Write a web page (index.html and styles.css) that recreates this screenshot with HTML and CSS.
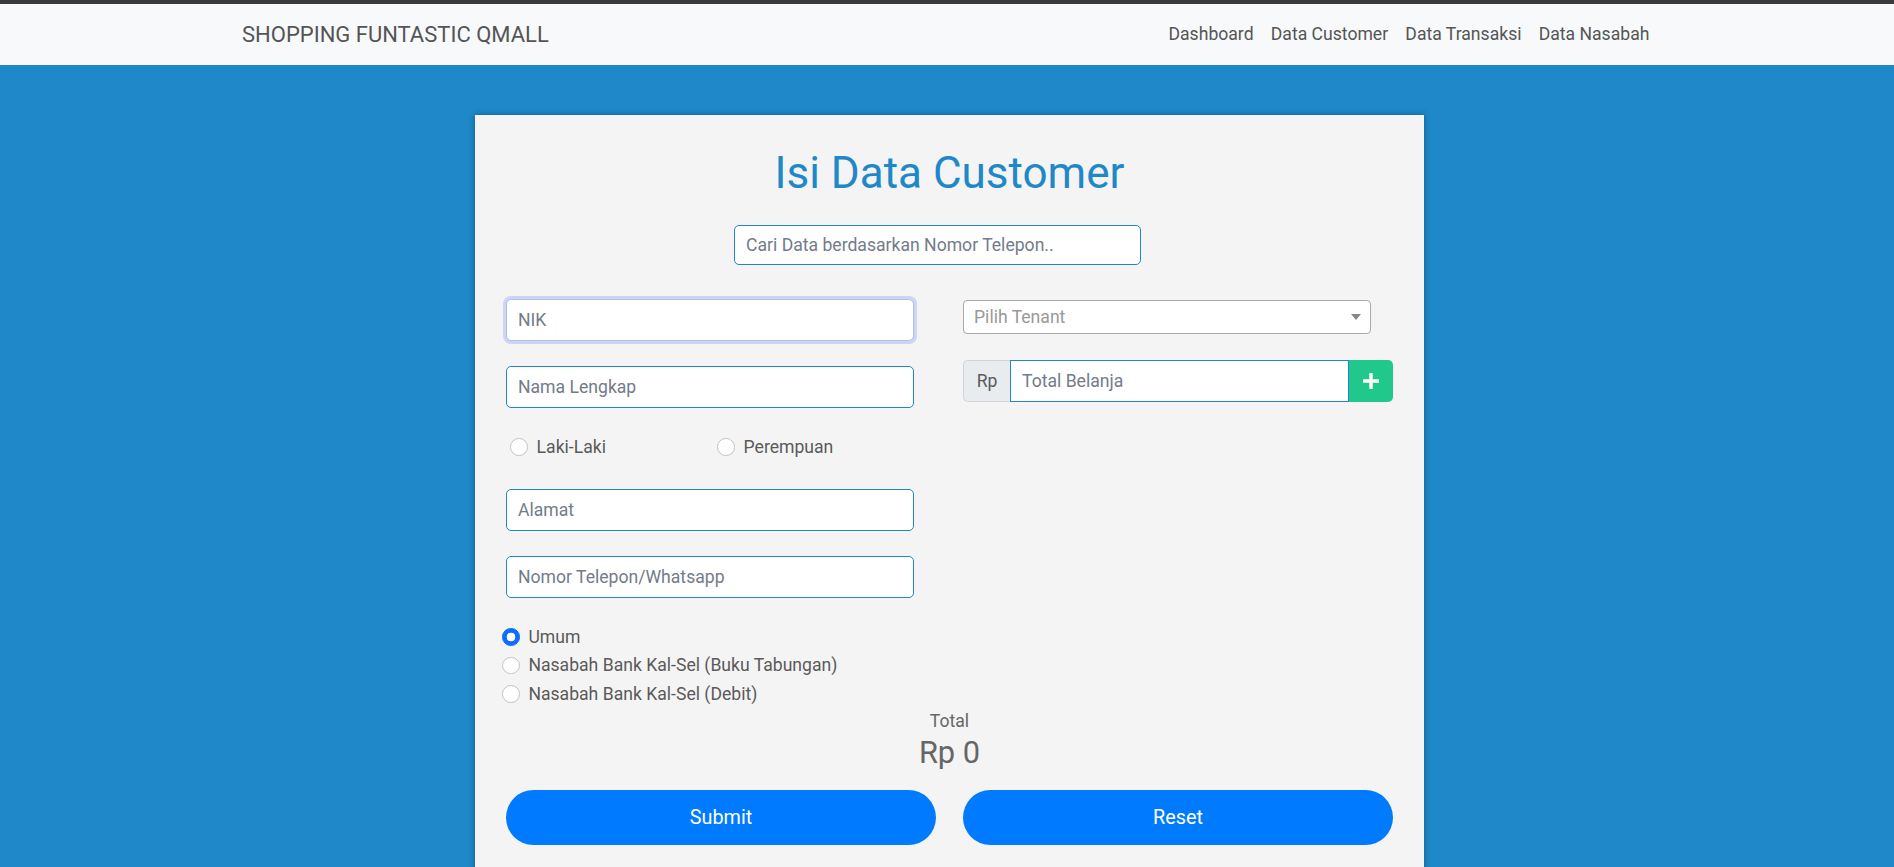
FILE: index.html
```html
<!DOCTYPE html>
<html lang="id">
<head>
<meta charset="utf-8">
<title>Isi Data Customer</title>
<link rel="stylesheet" href="styles.css">
</head>
<body>
<nav class="navbar">
  <div class="nav-container">
    <a class="brand" href="#">SHOPPING FUNTASTIC QMALL</a>
    <ul class="nav-links">
      <li><a href="#">Dashboard</a></li>
      <li><a href="#">Data Customer</a></li>
      <li><a href="#">Data Transaksi</a></li>
      <li><a href="#">Data Nasabah</a></li>
    </ul>
  </div>
</nav>

<main class="main">
  <section class="card">
    <h1 class="title">Isi Data Customer</h1>
    <input class="search" type="text" placeholder="Cari Data berdasarkan Nomor Telepon..">

    <div class="row">
      <div class="col">
        <input class="field field-focus" type="text" placeholder="NIK">
        <input class="field" type="text" placeholder="Nama Lengkap">
        <div class="gender">
          <label class="check first"><input class="radio" type="radio" name="jk"><span>Laki-Laki</span></label>
          <label class="check"><input class="radio" type="radio" name="jk"><span>Perempuan</span></label>
        </div>
        <input class="field" type="text" placeholder="Alamat">
        <input class="field last" type="text" placeholder="Nomor Telepon/Whatsapp">
      </div>
      <div class="col">
        <div class="select">
          <span class="select-text">Pilih Tenant</span>
          <span class="select-arrow"></span>
        </div>
        <div class="input-group">
          <span class="addon">Rp</span>
          <input class="group-input" type="text" placeholder="Total Belanja">
          <button class="add-btn" type="button" aria-label="Tambah">
            <svg width="16" height="16" viewBox="0 0 16 16"><path d="M8 0v16M0 8h16" stroke="#fff" stroke-width="3.4" fill="none"/></svg>
          </button>
        </div>
      </div>
    </div>

    <div class="member">
      <label class="check-line"><input class="radio" type="radio" name="tipe" checked><span>Umum</span></label>
      <label class="check-line"><input class="radio" type="radio" name="tipe"><span>Nasabah Bank Kal-Sel (Buku Tabungan)</span></label>
      <label class="check-line"><input class="radio" type="radio" name="tipe"><span>Nasabah Bank Kal-Sel (Debit)</span></label>
    </div>

    <div class="total">
      <p class="total-label">Total</p>
      <h3 class="total-value">Rp 0</h3>
    </div>

    <div class="actions">
      <button class="btn" type="button">Submit</button>
      <button class="btn" type="button">Reset</button>
    </div>
  </section>
</main>
</body>
</html>
```

FILE: styles.css
```css
* {
  box-sizing: border-box;
}

html, body {
  margin: 0;
  padding: 0;
}

body {
  font-family: Roboto, "Liberation Sans", sans-serif;
  font-size: 17.6px;
  line-height: 1.5;
  color: #5a5a5a;
  background: #1e88c8;
  min-height: 867px;
  overflow: hidden;
}

/* Navbar */
.navbar {
  border-top: 4px solid #3b3b3b;
  background: #f8f9fb;
  height: 65px;
}

.nav-container {
  width: 1426px;
  margin: 0 auto;
  height: 61px;
  display: flex;
  align-items: center;
  justify-content: space-between;
}

.brand {
  padding-left: 8px;
  font-size: 22px;
  line-height: 33px;
  color: #555;
  text-decoration: none;
}

.nav-links {
  display: flex;
  list-style: none;
  margin: 0 2px 0 0;
  padding: 0;
}

.nav-links a {
  display: block;
  padding: 0 8.6px;
  font-size: 17.6px;
  line-height: 26.4px;
  color: #555;
  text-decoration: none;
}

/* Main */
.main {
  padding: 50px 0 0 5px;
}

.card {
  width: 949px;
  margin: 0 auto;
  background: #f4f4f4;
  box-shadow: 0 0 6px rgba(0, 0, 0, 0.35);
  padding: 32px 31px 40px;
}

.title {
  margin: 0 0 25px;
  text-align: center;
  font-size: 44px;
  line-height: 52.8px;
  font-weight: 400;
  color: #1e88c8;
}

.search {
  display: block;
  width: 407px;
  height: 40px;
  margin-left: 228px;
  border: 1px solid #1e88c8;
  border-radius: 5px;
  padding: 0 11px;
  font-family: inherit;
  font-size: 17.6px;
  color: #495057;
  background: #fff;
}

input::placeholder {
  color: #737b8a;
  opacity: 1;
}

/* Form row */
.row {
  display: grid;
  grid-template-columns: 1fr 1fr;
  column-gap: 27px;
  margin-top: 34px;
}

.col {
  display: flex;
  flex-direction: column;
  align-items: flex-start;
}

.field {
  display: block;
  width: 408px;
  height: 42px;
  border: 1px solid #1e88c8;
  border-radius: 5px;
  padding: 0 11px;
  margin-bottom: 25px;
  font-family: inherit;
  font-size: 17.6px;
  color: #495057;
  background: #fff;
}

.field.last {
  margin-bottom: 0;
}

.field-focus {
  border-color: #aebcf0;
  box-shadow: 0 0 0 3px rgba(160, 176, 235, 0.45);
}

.gender {
  display: flex;
  align-items: center;
  height: 24px;
  margin: 2px 0 30px;
}

.check {
  display: flex;
  align-items: center;
  gap: 9px;
  color: #5a5a5a;
}

.check.first {
  width: 211px;
  padding-left: 4px;
}

.radio {
  appearance: none;
  -webkit-appearance: none;
  flex: none;
  width: 17.6px;
  height: 17.6px;
  margin: 0;
  border: 1px solid #c4c4c4;
  border-radius: 50%;
  background: #fff;
}

.radio:checked {
  border-color: #0d6efd;
  background: #0d6efd radial-gradient(circle, #fff 0 4.2px, transparent 4.6px);
}

/* Right column */
.select {
  width: 408px;
  height: 34px;
  border: 1px solid #aaa;
  border-radius: 4px;
  background: #fff;
  display: flex;
  align-items: center;
  justify-content: space-between;
  padding: 0 9px 0 10px;
  margin: 1px 0 26px;
}

.select-text {
  color: #999;
  font-size: 17.6px;
}

.select-arrow {
  width: 0;
  height: 0;
  border-left: 5px solid transparent;
  border-right: 5px solid transparent;
  border-top: 6px solid #888;
}

.input-group {
  display: flex;
  width: 430px;
  height: 42px;
}

.addon {
  flex: none;
  width: 47px;
  display: flex;
  align-items: center;
  justify-content: center;
  background: #e9ecef;
  border: 1px solid #ced4da;
  border-right: none;
  border-radius: 5px 0 0 5px;
  color: #5a5a5a;
}

.group-input {
  flex: 1;
  min-width: 0;
  border: 1px solid #1e88c8;
  padding: 0 11px;
  font-family: inherit;
  font-size: 17.6px;
  background: #fff;
}

.add-btn {
  flex: none;
  width: 44px;
  border: none;
  border-radius: 0 5px 5px 0;
  background: #20c98b;
  display: flex;
  align-items: center;
  justify-content: center;
  padding: 0;
}

/* Member type radios */
.member {
  margin: 26px 0 0 -4px;
}

.check-line {
  display: flex;
  align-items: center;
  gap: 8.8px;
  min-height: 26.4px;
  margin-bottom: 2.2px;
  color: #5a5a5a;
}

/* Total */
.total {
  text-align: center;
  margin-top: -2px;
}

.total-label {
  margin: 0;
  line-height: 26.4px;
  color: #666;
}

.total-value {
  margin: 0;
  font-size: 30.8px;
  line-height: 37px;
  font-weight: 400;
  color: #666;
}

/* Buttons */
.actions {
  display: grid;
  grid-template-columns: 1fr 1fr;
  column-gap: 27px;
  margin-top: 19px;
}

.btn {
  height: 55px;
  border: none;
  border-radius: 28px;
  background: #007bff;
  color: #fff;
  font-family: inherit;
  font-size: 19.8px;
}
```
